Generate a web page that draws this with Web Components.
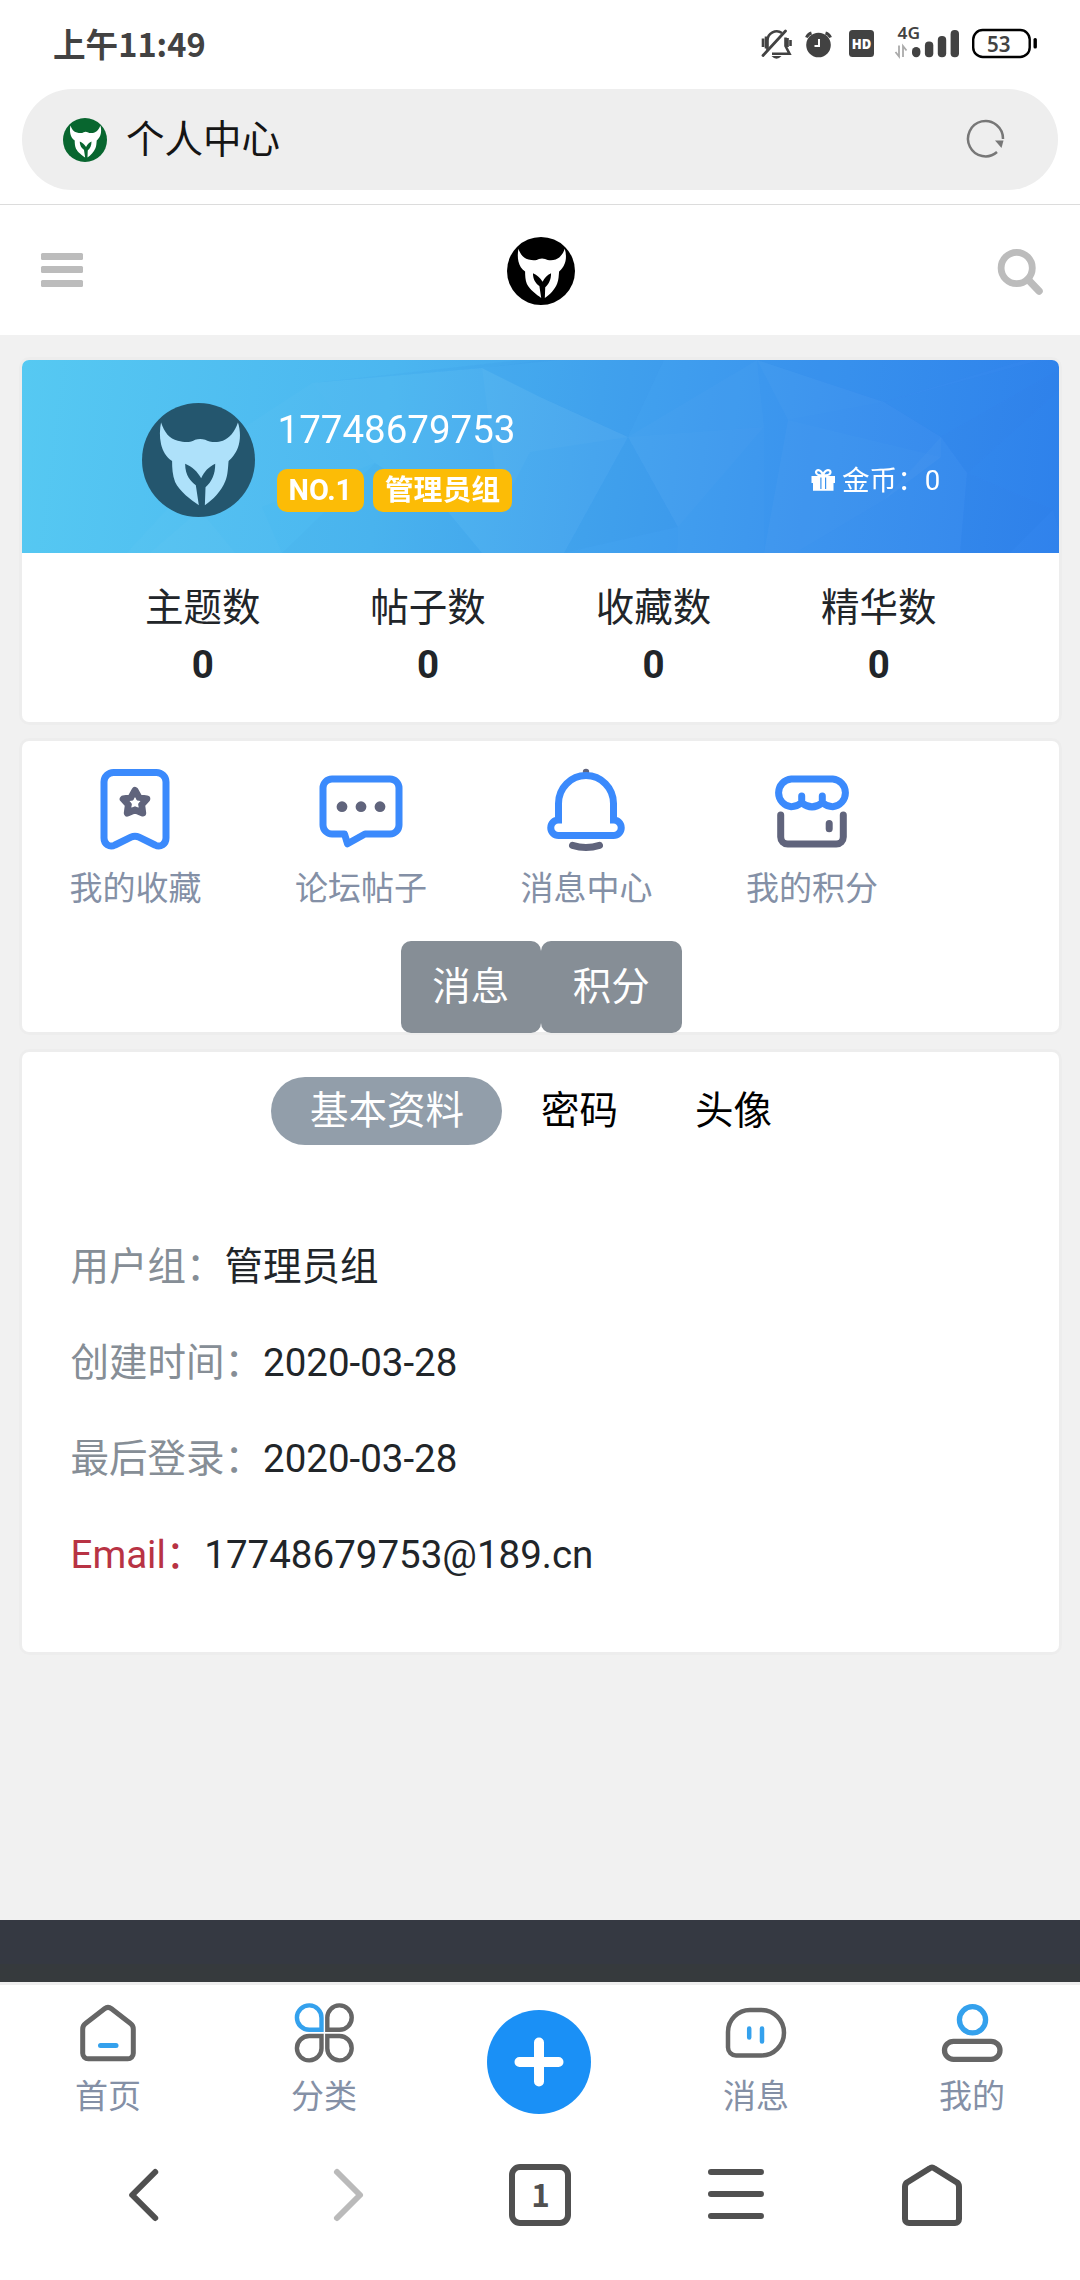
<!DOCTYPE html>
<html lang="zh-CN">
<head>
<meta charset="utf-8">
<title>个人中心</title>
<style>
body{margin:0;background:#f1f1f1;font-family:Roboto,"Noto Sans CJK SC",sans-serif;font-size:38.5px;color:#212529}
</style>
</head>
<body>
<forum-app></forum-app>
<script>
const define = (name, html) => {
  const t = document.createElement('template');
  t.innerHTML = html;
  customElements.define(name, class extends HTMLElement {
    constructor() {
      super();
      this.attachShadow({ mode: 'open' }).appendChild(t.content.cloneNode(true));
    }
  });
};

define('bull-logo', `
<style>
:host{display:block;flex:none;width:var(--w,68px);height:var(--h,68px)}
svg{display:block;width:100%;height:100%}
</style>
<svg viewBox="13 18 338 338" preserveAspectRatio="none">
<circle cx="182" cy="187" r="169" fill="var(--disc,#000)"/>
<path fill="var(--bull,#fff)" d="M70 76C80 105 95 125 120 130C145 137 160 134 172 127Q187 122 202 127C215 134 235 137 255 130C275 122 290 105 300 76C308 100 308 130 300 150C292 170 283 180 272 190C270 210 270 232 262 250C250 280 225 305 201 321L203 268C222 250 232 230 232 198C212 208 200 220 190 241C178 220 163 207 142 198C142 235 160 250 174 262L183 321C160 305 125 280 112 252C104 232 103 210 103 190C85 178 75 160 70 140C65 118 66 95 70 76z"/>
</svg>`);

define('status-bar', `
<style>
:host{display:flex;justify-content:space-between;height:89px;font-family:"Noto Sans CJK SC",sans-serif;color:#424242}
.time{margin-left:53px;font-size:32.600px;font-weight:700;line-height:86px}
svg{display:block;width:300px;height:60px;margin:15px 30px 0 0}
</style>
<span class="time">上午11:49</span>
<svg viewBox="750 15 300 60">
<g fill="none" stroke="#424242" stroke-width="2.6">
<path d="M767.5 50v-9.500a9.200 9.200 0 0 1 14.500-7.500M785.500 37.500v8.500l4 7.700h-17.500M763 38.500v8.500M766 36.500v12M787.500 38v9M790.500 40v6"/>
<path d="M763 55.500L785.500 31" stroke-width="2.800" stroke-linecap="round"/>
</g>
<path d="M771.500 56h10q-5 5.500-10 0z" fill="#424242"/>
<g><circle cx="818.500" cy="45" r="12.300" fill="#424242"/>
<path d="M806.500 37.500a8 8 0 0 1 5-4.500M830.500 37.500a8 8 0 0 0-5-4.500" fill="none" stroke="#424242" stroke-width="3"/>
<path d="M819 39v7h-4.500" fill="none" stroke="#fff" stroke-width="2"/></g>
<rect x="849" y="30" width="25" height="27" rx="3.500" fill="#424242"/>
<text x="861.500" y="48.800" text-anchor="middle" font-family="Open Sans" font-weight="800" font-size="14" fill="#fff" textLength="19.500" lengthAdjust="spacingAndGlyphs">HD</text>
<text x="897.500" y="39" font-family="Noto Sans" font-weight="600" font-size="16" fill="#424242" textLength="22.500" lengthAdjust="spacingAndGlyphs">4G</text>
<path d="M899 45.500v11l-3.500-4.500M903 57V46l3.500 4.500" fill="none" stroke="#aaa" stroke-width="1.800"/>
<g fill="#424242"><rect x="912" y="47" width="8.400" height="10.200" rx="4.200"/><rect x="924.900" y="41.500" width="8.400" height="15.700" rx="4"/><rect x="937.800" y="36" width="8.400" height="21.200" rx="4"/><rect x="950.600" y="30" width="8.400" height="27.200" rx="4"/></g>
<rect x="973.200" y="30" width="56.500" height="27" rx="9.500" fill="none" stroke="#000" stroke-width="2.400"/>
<rect x="1033.500" y="38" width="3.400" height="10.500" rx="1.500" fill="#000"/>
<text x="998.800" y="51.800" text-anchor="middle" font-family="Noto Sans" font-weight="600" font-size="21.500" fill="#424242" textLength="23.500" lengthAdjust="spacingAndGlyphs">53</text>
</svg>`);

define('address-bar', `
<style>
:host{display:block;padding:0 22px 14px;border-bottom:1px solid #dcdcdc}
.pill{display:flex;align-items:center;height:101px;border-radius:50.500px;background:#eee;padding:0 50px 0 41px;box-sizing:border-box}
bull-logo{--w:44px;--h:44px;--disc:#08662f}
span{flex:1;margin-left:19px;height:101px;line-height:101px;color:#151515}
svg{display:block;width:48px;height:48px}
</style>
<div class="pill"><bull-logo></bull-logo><span><slot></slot></span>
<svg viewBox="960 115 48 48"><path d="M1003 138A17.500 17.700 0 1 0 997 151" fill="none" stroke="#777" stroke-width="2.500"/><path d="M995 139.500h8.500l-2 7.500z" fill="#777"/></svg></div>`);

define('site-header', `
<style>
:host{display:flex;align-items:center;justify-content:space-between;height:130px;padding:2px 34px 0 38px;box-sizing:border-box;margin-bottom:25px;background:#fff}
svg{display:block;width:50px;height:52px}
bull-logo{margin-right:3px}
</style>
<svg viewBox="38 245 50 52" fill="#bcbcbc"><rect x="41" y="253" width="42" height="7" rx="1.500"/><rect x="41" y="266" width="42" height="7" rx="1.500"/><rect x="41" y="280" width="42" height="7" rx="1.500"/></svg>
<bull-logo></bull-logo>
<svg viewBox="996 245 50 52" fill="none" stroke="#bcbcbc"><circle cx="1016.700" cy="268" r="15.600" stroke-width="6.800"/><path d="M1028 279.500L1039 291" stroke-width="7.500" stroke-linecap="round"/></svg>`);

define('ui-card', `
<style>
:host{display:block;width:1037px;margin:0 21px 0 22px;background:#fff;border-radius:7px;box-shadow:0 0 0 3px rgba(0,0,0,.015)}
</style><slot></slot>`);

define('user-badge', `
<style>
:host{display:block;height:43px;line-height:43px;padding:0 11.500px;border-radius:10px;background:#fcbc06;color:#fff;font-size:28.900px;font-weight:700}
</style><slot></slot>`);

define('profile-hero', `
<style>
:host{display:grid;height:193px;border-radius:7px 7px 0 0;overflow:hidden;background:linear-gradient(97deg,#56c9f2,#4bb6f0 35%,#42a3ee 55%,#3991ee 78%,#3082ec);color:#fff}
.bg,.row{grid-area:1/1;display:block;width:1037px;height:193px;box-sizing:border-box}
.bg g{opacity:.6}
.row{display:flex;padding:43px 0 0 120px}
bull-logo{--w:113px;--h:114px;--disc:#24566e;--bull:#aee1fa}
.info{margin-left:22px;margin-top:-2px;flex:1}
.name{line-height:58px;height:68px;font-size:38.500px;padding-left:.5px;box-sizing:border-box}
.badges{display:flex;gap:9.500px}
.gold{display:flex;width:248px;margin-top:54px;font-size:27.600px;line-height:48px;gap:6px}
.gold svg{width:25px;height:24px;margin-top:11px}
</style>
<svg class="bg" viewBox="22 360 1037 193">
<g fill="#fff">
<path opacity=".05" d="M312 383L482 368L540 397L628 437L564 553H482L444 507L375 463z"/>
<path opacity=".035" d="M312 383L375 463L262 507L282 553L120 560L240 430z"/>
<path opacity=".03" d="M200 510L235 553H150z"/>
<path opacity=".04" d="M482 368L540 397L628 437L530 452L500 510z"/>
<path opacity=".05" d="M628 437L764 427L678 527z"/>
<path opacity=".04" d="M757 360L788 420L884 402z"/>
<path opacity=".05" d="M788 420L941 457L884 500L795 553H764z"/>
<path opacity=".03" d="M884 402L941 437L941 457L788 420z"/>
<path opacity=".035" d="M941 437L967 473L960 553H795L884 500z"/>
<path opacity=".035" d="M757 360L628 437L764 427z"/>
<path opacity=".025" d="M678 527L764 427V553H677z"/>
</g>
<g fill="#1468d8">
<path opacity=".06" d="M312 383L482 368L560 360H520z"/>
<path opacity=".045" d="M482 368L540 360H664L628 437L540 397z"/>
<path opacity=".05" d="M884 402L1059 355V370L941 437z"/>
<path opacity=".05" d="M1059 390L967 473L1053 510L1059 530z"/>
<path opacity=".05" d="M757 360L884 402L1059 350z"/>
<path opacity=".04" d="M628 437L678 527L564 553z"/>
<path opacity=".04" d="M444 507L375 463L282 553H482z"/>
<path opacity=".04" d="M941 437L967 473L960 553H1010L1053 510L967 473L1059 390V370z"/>
</g></svg>
<div class="row"><bull-logo></bull-logo>
<div class="info"><div class="name">17748679753</div><div class="badges"><user-badge>NO.1</user-badge><user-badge>管理员组</user-badge></div></div>
<div class="gold"><svg viewBox="0 0 25 24" fill="#fff"><path d="M.5 8h23.500v7H.5z M2 14.500h20.500v8.300H2z"/><path d="M12 7.500C8 7.500 5 6.500 5 4.200s4-4 7 2.500C15 .2 19.500 1.700 19.500 4.200S16 7.500 12 7.500z" fill="none" stroke="#fff" stroke-width="2.200"/><path d="M9.300 9.500h1.200v11.500H9.300zM14 9.500h1.200v11.500H14z" fill="#3a93ee"/></svg><span>金币：0</span></div></div>`);

define('stat-item', `
<style>
:host{display:block;width:225.400px;text-align:center;line-height:57px}
b{display:block;font-weight:700}
</style><slot></slot><b>0</b>`);

define('stat-row', `
<style>:host{display:flex;padding:26px 0 0 68px;height:169px;box-sizing:border-box}</style>
<stat-item>主题数</stat-item><stat-item>帖子数</stat-item><stat-item>收藏数</stat-item><stat-item>精华数</stat-item>`);

define('quick-item', `
<style>
:host{display:flex;flex-direction:column;align-items:center;width:225.500px;font-size:33px;line-height:50px;color:#8490a6}
::slotted(svg){display:block;width:100px;height:100px;margin-bottom:4px}
</style><slot name="icon"></slot><slot></slot>`);

define('gray-button', `
<style>:host{display:block;width:140.500px;height:92px;line-height:91px;border-radius:10px;background:#868e96;color:#fff;text-align:center}</style><slot></slot>`);

define('quick-panel', `
<style>
:host{display:block;height:291px}
.icons{display:flex;padding:19px 0 0 .7px;height:181px}
.btns{display:flex;justify-content:center;padding-left:1px}
svg{fill:none;stroke:#3b8afc;stroke-width:7;stroke-linejoin:round;stroke-linecap:round}
.d{stroke:#60647c}
.f{fill:#60647c;stroke:none}
</style>
<div class="icons">
<quick-item><svg slot="icon" viewBox="0 0 100 100"><path d="M28.500 12.500H71.500a9.500 9.500 0 0 1 9.500 9.500V78c0 6-5.500 10-11 7L54 77.200Q50 75.200 46 77.200L30 85C24.500 88 19 84 19 78V22a9.500 9.500 0 0 1 9.500-9.500z"/><path class="d" d="M50 30.500L54 37.700 61.800 39 56.600 44.700 57.700 53 50 49.700 42.300 53 43.400 44.700 38.200 39 46 37.700z"/><path d="M50 37L51.800 40.600 55.500 41 52.900 43.700 53.600 47.700 50 45.900 46.400 47.700 47.100 43.700 44.500 41 48.200 40.600z" style="fill:#fff;stroke:none"/></svg>我的收藏</quick-item>
<quick-item><svg slot="icon" viewBox="0 0 100 100"><path d="M21 19H79a9 9 0 0 1 9 9V65a9 9 0 0 1-9 9H54L36.500 83.800 33.500 74H21a9 9 0 0 1-9-9V28a9 9 0 0 1 9-9z"/><g class="f"><circle cx="31" cy="46.700" r="5.400"/><circle cx="50" cy="46.700" r="5.400"/><circle cx="69" cy="46.700" r="5.400"/></g></svg>论坛帖子</quick-item>
<quick-item><svg slot="icon" viewBox="0 0 100 100"><circle class="f" cx="50" cy="12" r="3.200"/><path stroke-linejoin="miter" d="M22.500 60V43.500a27.500 28 0 0 1 55 0V60a7.750 7.750 0 0 1 0 15.500H22.500a7.750 7.750 0 0 1 0-15.500z"/><path class="d" d="M36.500 85.300Q50 89.500 63.500 85.300"/></svg>消息中心</quick-item>
<quick-item><svg slot="icon" viewBox="0 0 100 100"><path d="M29.300 19H70.700a13.900 13.900 0 0 1 0 27.700Q65 46.700 60.300 42.700Q50 51 39.700 42.700Q35 46.700 29.300 46.700a13.900 13.900 0 0 1 0-27.700zM39.700 42.700V36M60.300 42.700V36"/><path class="d" d="M18.700 55V77a7 7 0 0 0 7 7H74.300a7 7 0 0 0 7-7V55M67.200 63.500V68.700"/></svg>我的积分</quick-item>
</div>
<div class="btns"><gray-button>消息</gray-button><gray-button>积分</gray-button></div>`);

define('tab-pill', `
<style>
:host{display:block;height:68px;line-height:68px;padding:0 38.500px;border-radius:34px;color:#000}
:host([active]){background:#929eaa;color:#fff}
</style><slot></slot>`);

define('info-row', `
<style>
:host{display:block;height:96px;line-height:96px;white-space:nowrap}
span{color:var(--label,#868e96)}
</style><span><slot name="label"></slot></span><slot></slot>`);

define('profile-info', `
<style>
:host{display:block;height:600px}
.tabs{display:flex;justify-content:center;padding:25px 0 74px 1px}
info-row{margin-left:48.500px}
.mail{--label:#b83344}
</style>
<div class="tabs"><tab-pill active>基本资料</tab-pill><tab-pill>密码</tab-pill><tab-pill>头像</tab-pill></div>
<info-row><span slot="label">用户组：</span>管理员组</info-row>
<info-row><span slot="label">创建时间：</span>2020-03-28</info-row>
<info-row><span slot="label">最后登录：</span>2020-03-28</info-row>
<info-row class="mail"><span slot="label">Email：</span>17748679753@189.cn</info-row>`);

define('nav-item', `
<style>
:host{display:flex;flex-direction:column;align-items:center;width:216px;font-size:33px;line-height:50px;color:#8490a6}
::slotted(svg){display:block;width:66px;height:66px;margin:15px 0 6px}
</style><slot name="icon"></slot><slot></slot>`);

define('site-nav', `
<style>
:host{display:flex;height:142px;background:#fff;border-top:3px solid #eee}
svg{fill:none;stroke:#666;stroke-width:5;stroke-linejoin:round;stroke-linecap:round}
.b{stroke:#34a1ed}
.plus{display:block;width:104px;height:104px;margin:25px 57px 0 55px;stroke:#fff;stroke-width:10}
</style>
<nav-item><svg slot="icon" viewBox="0 0 66 66"><path d="M10.500 23.500L29.500 8.800Q33 6 36.500 8.800L55.500 23.500Q58.300 25.500 58.300 29V53.300a5.500 5.500 0 0 1-5.500 5.500H13.200a5.500 5.500 0 0 1-5.500-5.500V29Q7.700 25.500 10.500 23.500z"/><path class="b" d="M25.500 45.500H41"/></svg>首页</nav-item>
<nav-item><svg slot="icon" viewBox="0 0 66 66" style="stroke-width:4.400;stroke-linejoin:miter"><path class="b" d="M30.500 29.800V18A12.300 12.200 0 1 0 18.200 29.800z"/><path d="M36.300 29.800V18A12.200 12.200 0 1 1 48.500 29.800zM30.500 36V47.800A12.300 12.200 0 1 1 18.200 36zM36.300 36V47.800A12.200 12.200 0 1 0 48.500 36z"/></svg>分类</nav-item>
<svg class="plus" viewBox="0 0 104 104"><circle cx="52" cy="52" r="52" fill="#1a90f6" stroke="none"/><path d="M32.500 52H71.500M52 32.500V71.500"/></svg>
<nav-item><svg slot="icon" viewBox="0 0 66 66" style="stroke-width:4.500"><path d="M27 10H38.300A22.700 22.750 0 0 1 38.300 55.500H13a8 8 0 0 1-8-8V32A22 22 0 0 1 27 10z"/><path class="b" d="M26.200 28.500V37.500M39 28.500V41.500"/></svg>消息</nav-item>
<nav-item><svg slot="icon" viewBox="0 0 66 66" style="stroke-width:5.300"><circle class="b" cx="33.500" cy="19.800" r="13.100"/><rect x="5.500" y="41.300" width="55.500" height="18" rx="9"/></svg>我的</nav-item>`);

define('browser-nav', `
<style>
:host{display:block;height:153px;background:#fff}
.row{display:flex;padding-left:46px}
svg{display:block;width:196px;height:110px;margin-top:13px;fill:none;stroke:#505050;stroke-width:6;stroke-linejoin:round;stroke-linecap:round}
text{fill:#505050;stroke:none;font:700 31.500px "Noto Sans CJK SC",sans-serif}
</style>
<div class="row">
<svg viewBox="46 2140 196 110"><path d="M155.200 2172L132.200 2195L155.200 2218"/></svg>
<svg viewBox="242 2140 196 110"><path style="stroke:#bababa" d="M337 2172L360 2195L337 2218"/></svg>
<svg viewBox="438 2140 196 110"><rect x="512" y="2167" width="56" height="56" rx="8"/><text x="540.500" y="2207" text-anchor="middle">1</text></svg>
<svg viewBox="634 2140 196 110"><path d="M711 2172H761M711 2194H761M711 2216H761"/></svg>
<svg viewBox="830 2140 196 110"><path d="M907 2182.500L929.500 2168.500Q932 2166.500 934.500 2168.500L957 2182.500Q959 2184 959 2187V2219a4 4 0 0 1-4 4H909a4 4 0 0 1-4-4V2187Q905 2184 907 2182.500z"/></svg>
</div>`);

define('forum-app', `
<style>
:host{display:block;width:1080px;height:2280px;overflow:hidden}
.top{background:#fff}
ui-card + ui-card{margin-top:19px}
ui-card + ui-card + ui-card{margin-top:20px}
.foot{height:62px;margin-top:268px;background:linear-gradient(#353942 71%,#363a3d 71%)}
</style>
<div class="top"><status-bar></status-bar><address-bar>个人中心</address-bar></div>
<site-header></site-header>
<ui-card><profile-hero></profile-hero><stat-row></stat-row></ui-card>
<ui-card><quick-panel></quick-panel></ui-card>
<ui-card><profile-info></profile-info></ui-card>
<div class="foot"></div>
<site-nav></site-nav>
<browser-nav></browser-nav>`);
</script>
</body>
</html>
